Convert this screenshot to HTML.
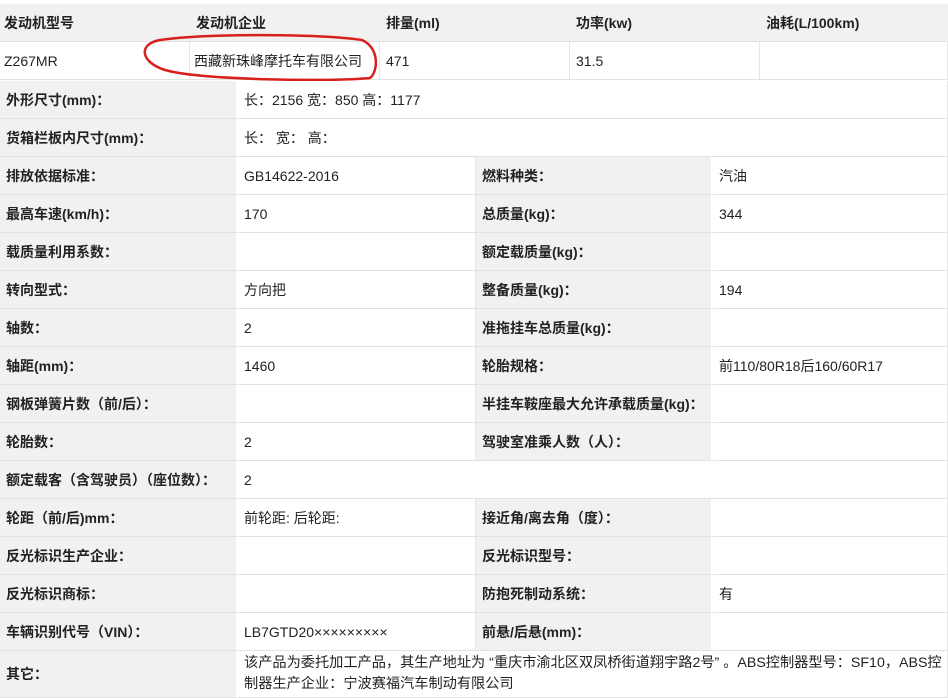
<!DOCTYPE html>
<html><head><meta charset="utf-8"><style>
body{margin:0;width:948px;height:698px;background:#fff;position:relative;overflow:hidden;font-family:"Liberation Sans","Noto Sans CJK SC",sans-serif;font-size:14px;color:#222}
.c{position:absolute;box-sizing:border-box;display:flex;align-items:center;padding-left:6px;border-bottom:1px solid #e2e2e2;white-space:nowrap}
.l{background:#f1f1f1;font-weight:bold;border-right:2px solid #fff}
.h{background:#f1f1f1;font-weight:bold;font-size:14px}
.v{background:#fff;border-right:1px solid #e6e6e6}
</style></head><body>
<div class="c h" style="left:0;top:4px;width:190px;height:38px;padding-left:4px">发动机型号</div>
<div class="c h" style="left:190px;top:4px;width:190px;height:38px">发动机企业</div>
<div class="c h" style="left:380px;top:4px;width:190px;height:38px">排量(ml)</div>
<div class="c h" style="left:570px;top:4px;width:190px;height:38px">功率(kw)</div>
<div class="c h" style="left:760px;top:4px;width:188px;height:38px">油耗(L/100km)</div>
<div class="c v" style="left:0;top:42px;width:190px;height:38px;padding-left:4px">Z267MR</div>
<div class="c v" style="left:190px;top:42px;width:190px;height:38px;padding-left:4px">西藏新珠峰摩托车有限公司</div>
<div class="c v" style="left:380px;top:42px;width:190px;height:38px">471</div>
<div class="c v" style="left:570px;top:42px;width:190px;height:38px">31.5</div>
<div class="c v" style="left:760px;top:42px;width:188px;height:38px"></div>
<svg style="position:absolute;left:0;top:0" width="948" height="100"><path d="M160 40 C210 33,320 34,362 40 C380 48,378 72,370 78 C330 82,200 80,165 70 C140 62,138 44,160 40 Z" fill="none" stroke="#d8201c" stroke-width="2.5"/></svg>
<div id="rows"></div>
<script>
var R=[
["外形尺寸(mm)：","长：2156 宽：850 高：1177",null],
["货箱栏板内尺寸(mm)：","长： 宽： 高：",null],
["排放依据标准：","GB14622-2016","燃料种类：","汽油"],
["最高车速(km/h)：","170","总质量(kg)：","344"],
["载质量利用系数：","","额定载质量(kg)：",""],
["转向型式：","方向把","整备质量(kg)：","194"],
["轴数：","2","准拖挂车总质量(kg)：",""],
["轴距(mm)：","1460","轮胎规格：","前110/80R18后160/60R17"],
["钢板弹簧片数（前/后）：","","半挂车鞍座最大允许承载质量(kg)：",""],
["轮胎数：","2","驾驶室准乘人数（人）：",""],
["额定载客（含驾驶员）（座位数）：","2",null],
["轮距（前/后)mm：","前轮距: 后轮距:","接近角/离去角（度）：",""],
["反光标识生产企业：","","反光标识型号：",""],
["反光标识商标：","","防抱死制动系统：","有"],
["车辆识别代号（VIN）：","LB7GTD20×××××××××","前悬/后悬(mm)：",""]];
var h="",y=81;
R.forEach(function(r,i){
h+='<div class="c l" style="left:0;top:'+y+'px;width:238px;height:38px">'+r[0]+'</div>';
if(r[2]===null){h+='<div class="c v" style="left:238px;top:'+y+'px;width:710px;height:38px;font-size:14px">'+r[1]+'</div>';}
else{
h+='<div class="c v" style="left:238px;top:'+y+'px;width:238px;height:38px;font-size:14px">'+r[1]+'</div>';
h+='<div class="c l" style="left:476px;top:'+y+'px;width:237px;height:38px">'+r[2]+'</div>';
h+='<div class="c v" style="left:713px;top:'+y+'px;width:235px;height:38px;font-size:14px">'+r[3]+'</div>';}
y+=38;});
h+='<div class="c l" style="left:0;top:'+y+'px;width:238px;height:'+(698-y)+'px">其它：</div>';
h+='<div class="c v" style="left:238px;top:'+y+'px;width:710px;height:'+(698-y)+'px;white-space:normal;line-height:21px;font-size:14.2px;padding-right:0">该产品为委托加工产品，其生产地址为 “重庆市渝北区双凤桥街道翔宇路2号” 。ABS控制器型号：SF10，ABS控制器生产企业：宁波赛福汽车制动有限公司</div>';
document.getElementById("rows").innerHTML=h;
</script>
</body></html>
